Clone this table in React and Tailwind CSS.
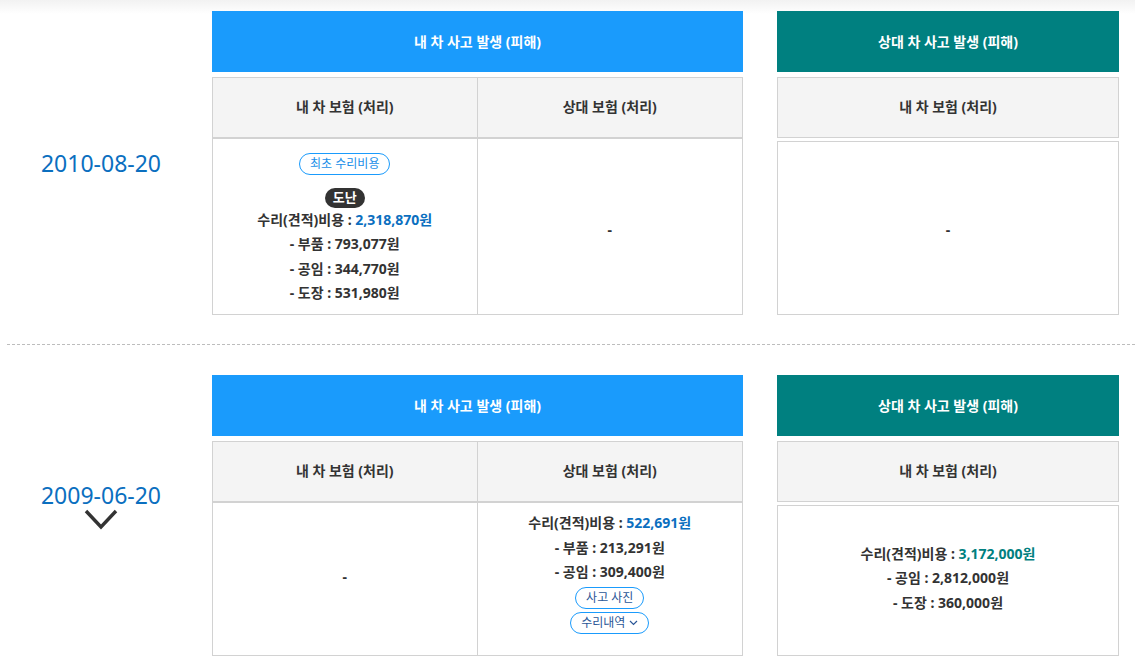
import React from 'react'

const font = { fontFamily: '"Noto Sans", "Noto Sans CJK KR", sans-serif' }

function Pill({ children, className = '' }) {
  return (
    <span className={`inline-flex items-center justify-center rounded-full border border-[#1a9bfc] bg-white px-[10px] h-[22px] text-[12px] leading-none ${className}`}>
      {children}
    </span>
  )
}

function Line({ label, value, color }) {
  return (
    <div className="leading-[24.5px]">
      {label} : <span className={color}>{value}</span>
    </div>
  )
}

function MainHeader({ color, children }) {
  return (
    <div className={`flex h-[61px] items-center justify-center text-[14px] font-bold text-white ${color}`}>
      {children}
    </div>
  )
}

function Chevron() {
  return (
    <svg width="34" height="21" viewBox="0 0 34 21" className="mx-auto">
      <polyline points="2,2 17,18 32,2" fill="none" stroke="#333" strokeWidth="3.4" />
    </svg>
  )
}

function Section({ date, chevron, leftBody, midBody, rightBody, second }) {
  return (
    <div className="flex items-center">
      <div className="w-[212px] shrink-0 pr-[10px] text-center">
        <div className="text-[23px] leading-[28px] text-[#0b6fbf]">{date}</div>
        {chevron && <Chevron />}
        {chevron && <div className="h-[20px]" />}
      </div>
      <div className="flex gap-[34px]">
        <div className="w-[531px]">
          <MainHeader color="bg-[#1a9bfc]">내 차 사고 발생 (피해)</MainHeader>
          <div className="mt-[5px] grid h-[62px] grid-cols-2 border border-b-2 border-[#d2d2d2] bg-[#f4f4f4] text-[14px] font-bold text-[#333]">
            <div className="flex items-center justify-center border-r border-[#d2d2d2] pb-[2px]">내 차 보험 (처리)</div>
            <div className="flex items-center justify-center pb-[2px]">상대 보험 (처리)</div>
          </div>
          <div className={`grid grid-cols-2 border border-t-0 border-[#d2d2d2] text-[14px] font-bold text-[#333] ${second ? 'h-[153px]' : 'h-[176px]'}`}>
            <div className={`flex flex-col items-center justify-center border-r border-[#d2d2d2] text-center ${second ? 'pb-[6px]' : 'pt-[5px]'}`}>{leftBody}</div>
            <div className={`flex flex-col items-center justify-center text-center ${second ? 'pb-[13px]' : 'pt-[5px]'}`}>{midBody}</div>
          </div>
        </div>
        <div className="w-[342px]">
          <MainHeader color="bg-[#008080]">상대 차 사고 발생 (피해)</MainHeader>
          <div className="mt-[5px] flex h-[61px] items-center justify-center border border-[#d2d2d2] bg-[#f4f4f4] pb-[2px] text-[14px] font-bold text-[#333]">
            내 차 보험 (처리)
          </div>
          <div className={`mt-[3px] flex flex-col items-center justify-center border border-[#d2d2d2] text-center text-[14px] font-bold text-[#333] ${second ? 'h-[151px] pb-[4px]' : 'h-[174px] pt-[2px]'}`}>
            {rightBody}
          </div>
        </div>
      </div>
    </div>
  )
}

export default function App() {
  return (
    <div style={font} className="min-h-screen bg-[linear-gradient(to_bottom,#f2f2f2,#ffffff_14px)] pt-[11px]">
      <Section
        date="2010-08-20"
        leftBody={
          <>
            <Pill className="font-normal text-[#1a8fe8]">최초 수리비용</Pill>
            <span className="mt-[13px] inline-flex h-[20px] items-center rounded-full bg-[#333] px-[8px] text-[13px] leading-none text-white">도난</span>
            <div>
              <Line label="수리(견적)비용" value="2,318,870원" color="text-[#0b6fbf]" />
              <Line label="- 부품" value="793,077원" />
              <Line label="- 공임" value="344,770원" />
              <Line label="- 도장" value="531,980원" />
            </div>
          </>
        }
        midBody={<span>-</span>}
        rightBody={<span>-</span>}
      />

      <div className="ml-[7px] mt-[29px] border-t border-dashed border-[#bdbdbd]" />

      <div className="mt-[30px]">
        <Section
          date="2009-06-20"
          chevron
          second
          leftBody={<span>-</span>}
          midBody={
            <>
              <Line label="수리(견적)비용" value="522,691원" color="text-[#0b6fbf]" />
              <Line label="- 부품" value="213,291원" />
              <Line label="- 공임" value="309,400원" />
              <Pill className="mt-[2px] font-normal text-[#2b5797]">사고 사진</Pill>
              <Pill className="mt-[3px] font-normal text-[#2b5797]">
                수리내역
                <svg width="9" height="6" viewBox="0 0 9 6" className="ml-[4px]">
                  <polyline points="1,1 4.5,4.5 8,1" fill="none" stroke="#2b5797" strokeWidth="1.2" />
                </svg>
              </Pill>
            </>
          }
          rightBody={
            <>
              <Line label="수리(견적)비용" value="3,172,000원" color="text-[#008080]" />
              <Line label="- 공임" value="2,812,000원" />
              <Line label="- 도장" value="360,000원" />
            </>
          }
        />
      </div>
    </div>
  )
}
